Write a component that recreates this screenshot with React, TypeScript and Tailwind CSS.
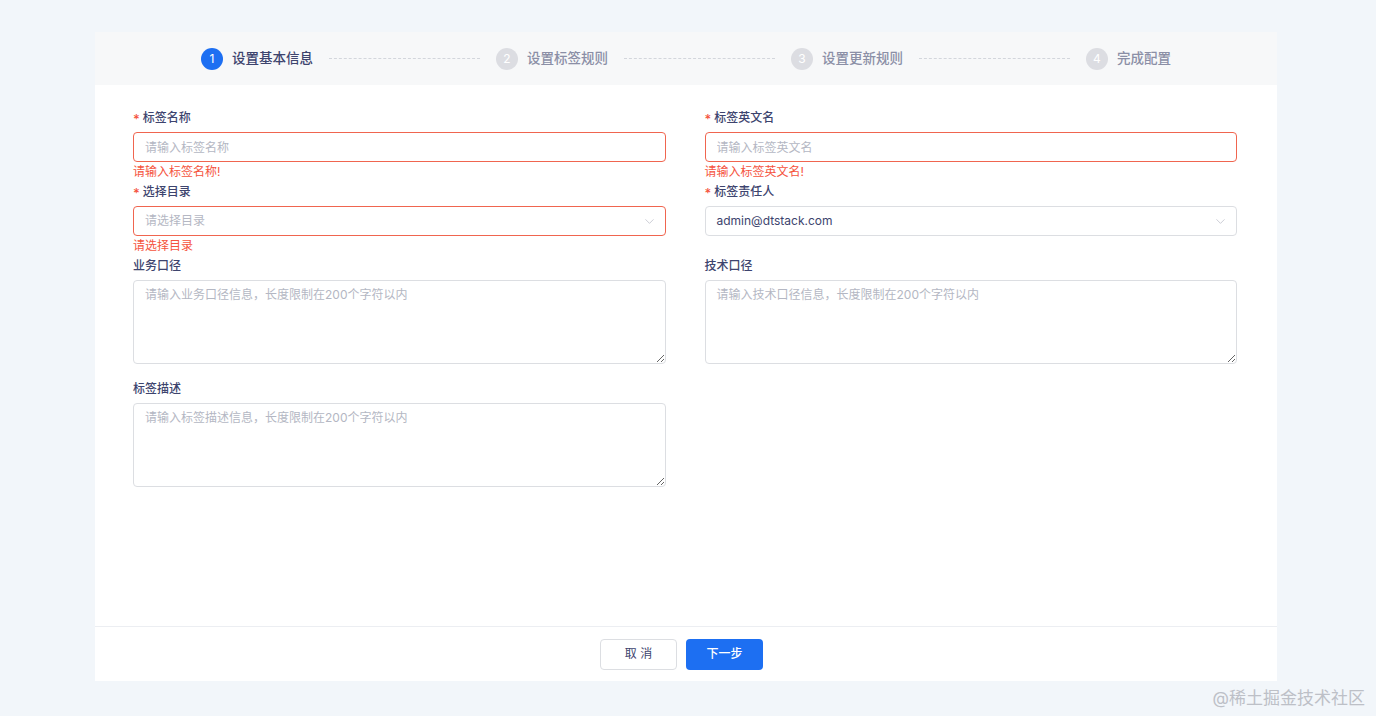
import { ChevronDown } from 'lucide-react'
import clsx from 'clsx'

const font = { fontFamily: 'Inter, "Noto Sans CJK SC", sans-serif' }

const steps = ['设置基本信息', '设置标签规则', '设置更新规则', '完成配置']

function Label({ text, required }: { text: string; required?: boolean }) {
  return (
    <div className="h-5 mb-1 flex items-center text-xs font-medium text-[#3d446e]">
      {required && <span className="text-[#f5533d] mr-[3px] text-[13px] leading-none pt-[3px]">*</span>}
      {text}
    </div>
  )
}

function Field({
  label,
  required,
  error,
  children,
  slot = 'h-5',
}: {
  label: string
  required?: boolean
  error?: string
  children: React.ReactNode
  slot?: string
}) {
  return (
    <div className="flex flex-col">
      <Label text={label} required={required} />
      {children}
      <div className={clsx(slot, 'text-xs leading-5 text-[#f5533d]')}>{error}</div>
    </div>
  )
}

function Input({ placeholder, error }: { placeholder: string; error?: boolean }) {
  return (
    <input
      placeholder={placeholder}
      className={clsx(
        'h-[30px] w-full rounded px-[11px] text-xs outline-none bg-white placeholder:text-[#b4b7c3]',
        error ? 'border border-[#f0654f]' : 'border border-[#dcdee2]'
      )}
    />
  )
}

function Select({ value, placeholder, error }: { value?: string; placeholder?: string; error?: boolean }) {
  return (
    <div
      className={clsx(
        'h-[30px] w-full rounded pl-[11px] pr-[8px] flex items-center justify-between text-xs bg-white',
        error ? 'border border-[#f0654f]' : 'border border-[#dcdee2]'
      )}
    >
      <span className={value ? 'text-[#3d446e]' : 'text-[#b4b7c3]'}>{value ?? placeholder}</span>
      <ChevronDown size={15} strokeWidth={1.1} className="text-[#b4b7c3]" />
    </div>
  )
}

function Textarea({ placeholder }: { placeholder: string }) {
  return (
    <textarea
      placeholder={placeholder}
      className="h-[84px] w-full rounded border border-[#dcdee2] px-[11px] py-1 text-xs leading-5 outline-none resize-y placeholder:text-[#b4b7c3]"
    />
  )
}

export default function App() {
  return (
    <div className="relative min-h-[716px] bg-[#f2f6fa] pt-8" style={font}>
      <div className="ml-[95px] w-[1182px] h-[649px] bg-white flex flex-col">
        {/* Steps */}
        <div className="h-[53px] bg-[#f7f8f9] flex items-center px-[106px]">
          {steps.map((s, i) => {
            const active = i === 0
            const last = i === steps.length - 1
            return (
              <div key={s} className={clsx('flex items-center', last ? 'flex-none' : 'flex-1')}>
                <span
                  className={clsx(
                    'w-[22px] h-[22px] rounded-full flex items-center justify-center text-xs text-white shrink-0',
                    active ? 'bg-[#1d6ff2]' : 'bg-[#dcdde2]'
                  )}
                >
                  {i + 1}
                </span>
                <span
                  className={clsx(
                    'ml-[9px] text-[13.5px] font-medium whitespace-nowrap',
                    active ? 'text-[#3d446e]' : 'text-[#8b8fa6]'
                  )}
                >
                  {s}
                </span>
                {!last && <div className="flex-1 mx-4 border-t border-dashed border-[#d3d6dc]" />}
              </div>
            )
          })}
        </div>

        {/* Form */}
        <div className="flex-1 pt-[23px] pl-[38px] pr-[40px]">
          <div className="grid grid-cols-2 gap-x-[39px]">
            <div className="flex flex-col">
              <Field label="标签名称" required error="请输入标签名称!">
                <Input placeholder="请输入标签名称" error />
              </Field>
              <Field label="选择目录" required error="请选择目录">
                <Select placeholder="请选择目录" error />
              </Field>
              <Field label="业务口径" slot="h-[15px]">
                <Textarea placeholder="请输入业务口径信息，长度限制在200个字符以内" />
              </Field>
              <Field label="标签描述">
                <Textarea placeholder="请输入标签描述信息，长度限制在200个字符以内" />
              </Field>
            </div>
            <div className="flex flex-col">
              <Field label="标签英文名" required error="请输入标签英文名!">
                <Input placeholder="请输入标签英文名" error />
              </Field>
              <Field label="标签责任人" required>
                <Select value="admin@dtstack.com" />
              </Field>
              <Field label="技术口径" slot="h-[15px]">
                <Textarea placeholder="请输入技术口径信息，长度限制在200个字符以内" />
              </Field>
            </div>
          </div>
        </div>

        {/* Footer */}
        <div className="h-[55px] border-t border-[#eceef2] flex items-center justify-center gap-[9px] pr-[9px]">
          <button className="w-[77px] h-[31px] rounded border border-[#dcdee2] bg-white text-xs text-[#3d446e]">
            取 消
          </button>
          <button className="w-[77px] h-[31px] rounded bg-[#1d6ff2] text-xs font-medium text-white">
            下一步
          </button>
        </div>
      </div>

      <div className="absolute right-[11px] bottom-[5px] text-[17px] text-[#bdc0c7]">@稀土掘金技术社区</div>
    </div>
  )
}
